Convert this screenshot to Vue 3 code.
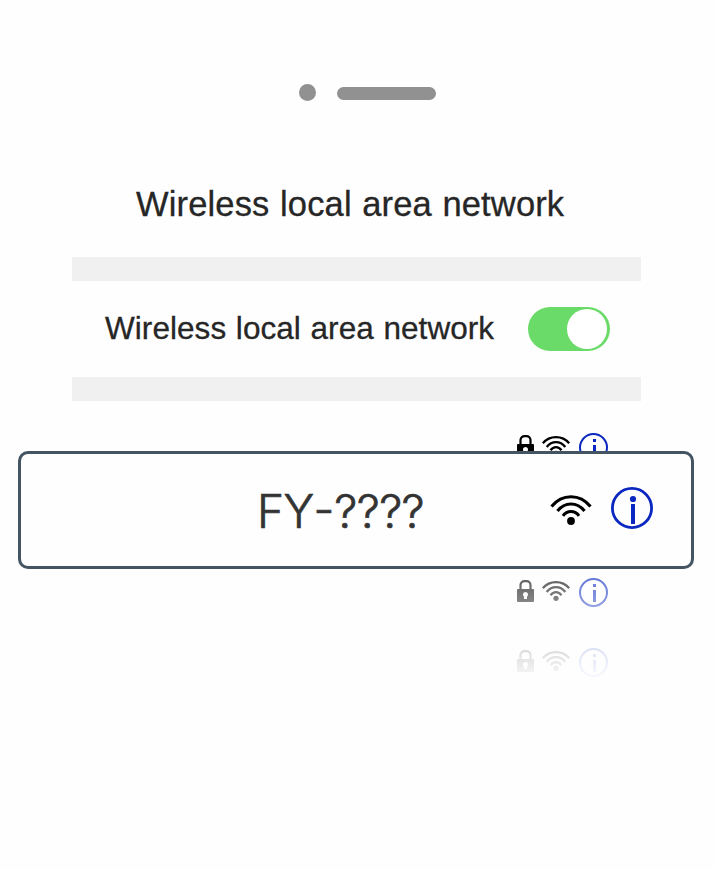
<script setup>
const rows = ['first', 'second', 'third']
const title = 'Wireless local area network'
</script>

<template>
  <main class="screen">
    <div class="speaker"><i class="dot"></i><i class="bar"></i></div>
    <h1 class="title">{{ title }}</h1>
    <div class="band"></div>
    <div class="setting">
      <span class="label">{{ title }}</span>
      <span class="toggle"><i class="knob"></i></span>
    </div>
    <div class="band"></div>
    <section class="networks">
      <div v-for="row in rows" :key="row" class="row" :class="row">
        <svg class="lock" width="17" height="22" viewBox="0 0 17 22">
          <path d="M3.500 10V5.100a4 4 0 0 1 4-4h2a4 4 0 0 1 4 4V10" fill="none" stroke="#000" stroke-width="2.200" />
          <path fill-rule="evenodd" d="M1 9h15q1 0 1 1v11q0 1-1 1h-15q-1 0-1-1v-11q0-1 1-1ZM8.500 12a2.600 2.600 0 0 0-1.500 4.700V19h3v-2.300A2.600 2.600 0 0 0 8.500 12Z" />
        </svg>
        <svg class="wifi" width="28" height="21" viewBox="0 0 28 21">
          <g fill="none" stroke="#000" stroke-width="2.300">
            <path d="M.8 8.300Q6 2.200 14 2.200T27.200 8.300" />
            <path d="M4.700 12Q8.500 7.200 14 7.200T23.300 12" />
            <path d="M8.500 15.300Q10.800 12.200 14 12.200T19.500 15.300" />
          </g>
          <circle cx="14" cy="18.300" r="2.600" />
        </svg>
        <svg class="info" width="29" height="29" viewBox="0 0 29 29">
          <circle cx="14.500" cy="14.500" r="13.500" fill="none" stroke="#0a28c0" stroke-width="2" />
          <path d="M14 6h3v3h-3zM14 12h3v12h-3z" fill="#0a28c0" />
        </svg>
      </div>
      <div class="card">
        <span class="ssid">FY<span class="dash">-</span>????</span>
        <svg class="card-wifi" width="42" height="30" viewBox="0 0 42 30">
          <g fill="none" stroke="#000" stroke-width="3.100">
            <path d="M1.500 11.500Q9.500 1.700 21 1.700t19.500 9.800" />
            <path d="M7.500 16Q13 9 21 9t13.500 7" />
            <path d="M13 20.800q3-4.300 8-4.300t8 4.300" />
          </g>
          <circle cx="21" cy="26" r="3.900" />
        </svg>
        <svg class="card-info" width="42" height="42" viewBox="0 0 42 42">
          <circle cx="21" cy="21" r="19.600" fill="none" stroke="#0a28c0" stroke-width="2.800" />
          <circle cx="22" cy="12" r="3.100" fill="#0a28c0" />
          <path d="M20 17h4v20h-4z" fill="#0a28c0" />
        </svg>
      </div>
    </section>
  </main>
</template>

<style>
body { background: #fefefe; }
</style>

<style scoped>
.screen {
  box-sizing: border-box;
  width: 714px;
  height: 869px;
  padding: 84px 73px 0 72px;
  overflow: hidden;
  background: #fefefe;
  color: #262626;
  font-family: "Liberation Sans", Arial, sans-serif;
}
.speaker {
  display: flex;
  align-items: flex-start;
  gap: 21px;
  height: 18px;
  padding-left: 227px;
}
.dot { width: 17px; height: 17px; border-radius: 50%; background: #919191; }
.bar { width: 99px; height: 13px; margin-top: 3px; border-radius: 7px; background: #919191; }
.title {
  height: 155px;
  margin: 0;
  padding-left: 64px;
  font-size: 34.5px;
  font-weight: 400;
  line-height: 204px;
  letter-spacing: 0.15px;
  word-spacing: 0.8px;
  white-space: nowrap;
  -webkit-text-stroke: 0.3px #262626;
}
.band { height: 24px; background: #f0f0f0; }
.setting {
  display: flex;
  align-items: center;
  justify-content: space-between;
  height: 96px;
  padding: 0 31px 0 33px;
}
.label {
  margin-bottom: 2px;
  font-size: 31.5px;
  letter-spacing: 0.06px;
  word-spacing: 0.8px;
  white-space: nowrap;
  -webkit-text-stroke: 0.3px #262626;
}
.toggle {
  display: flex;
  box-sizing: border-box;
  align-items: center;
  justify-content: flex-end;
  flex: none;
  width: 82px;
  height: 44px;
  padding: 0 3px;
  border-radius: 22px;
  background: #6adb68;
}
.knob { width: 40px; height: 40px; border-radius: 50%; background: #fff; }
.networks { position: relative; padding-top: 32px; }
.row {
  display: flex;
  align-items: flex-start;
  justify-content: flex-end;
  height: 30px;
  padding-right: 33px;
}
.row.first { margin-bottom: 115px; }
.row.second {
  margin-bottom: 40px;
  mask-image: linear-gradient(rgba(0, 0, 0, 0.63), rgba(0, 0, 0, 0.43));
}
.row.third { mask-image: linear-gradient(rgba(0, 0, 0, 0.14), rgba(0, 0, 0, 0.02)); }
.lock { margin: 2px 8px 0 0; }
.wifi { margin: 2px 9px 0 0; }
.card {
  position: absolute;
  top: 50px;
  left: -54px;
  display: flex;
  box-sizing: border-box;
  align-items: center;
  width: 676px;
  height: 118px;
  padding-right: 38px;
  border: 3px solid #445463;
  border-radius: 10px;
  background: #fefefe;
}
.ssid {
  margin: 2px auto 0 236px;
  color: #333;
  font-family: Inter, "Liberation Sans", sans-serif;
  font-size: 46px;
  font-weight: 300;
  letter-spacing: -0.6px;
  white-space: nowrap;
  -webkit-text-stroke: 0.7px #333;
}
.dash {
  display: inline-block;
  letter-spacing: 0;
  transform: translateY(-2px);
}
.card-wifi { margin: 0 19px 0 0; }
.card-info { margin-bottom: 4px; }
</style>
